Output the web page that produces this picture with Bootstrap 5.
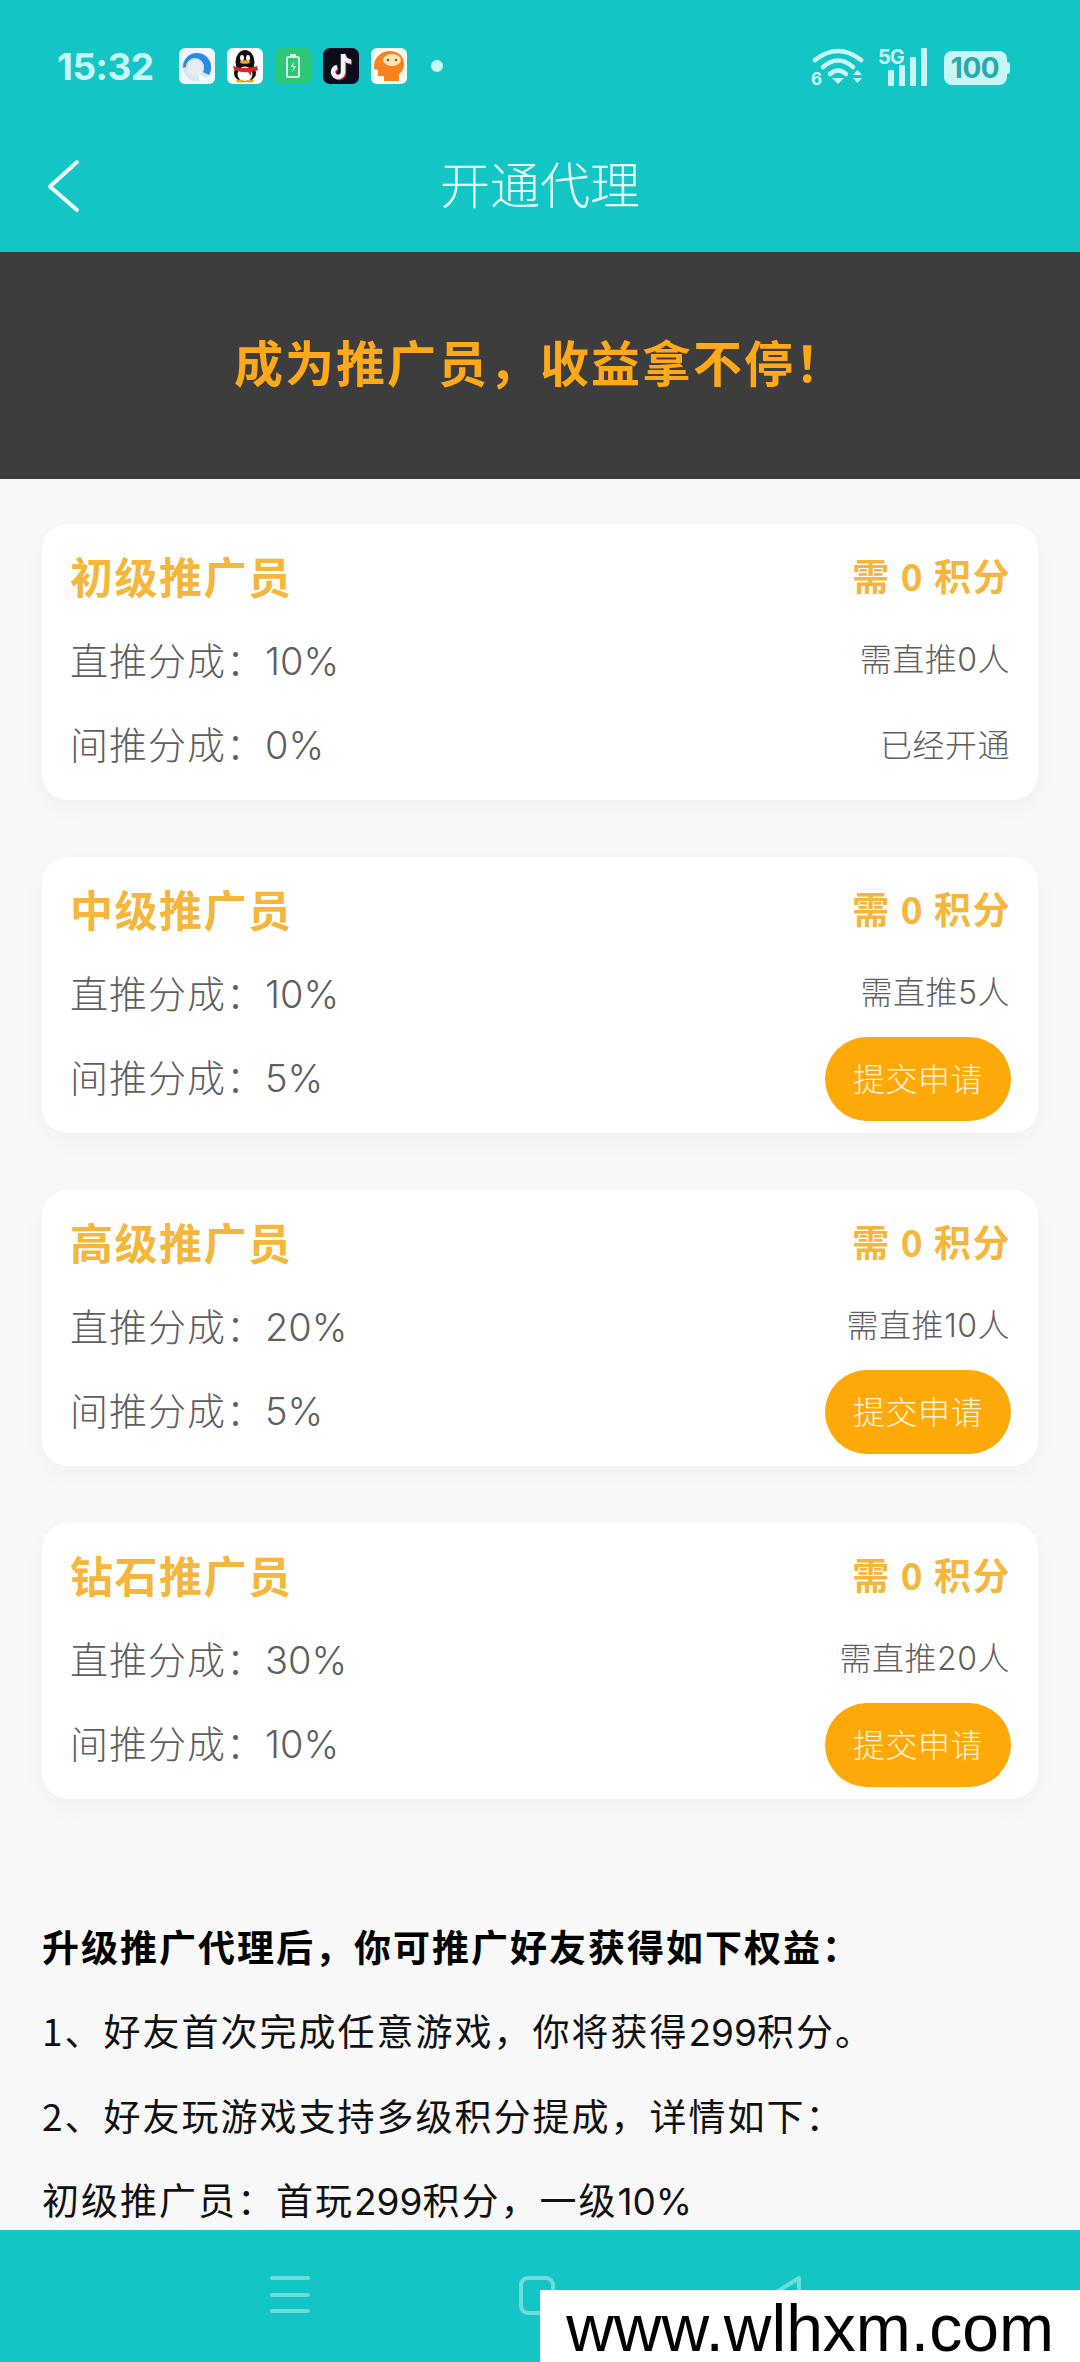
<!DOCTYPE html>
<html lang="zh-CN">
<head>
  <meta charset="UTF-8" />
  <meta name="viewport" content="width=device-width, initial-scale=1.0"/>
  <title>开通代理</title>
  <link href="https://cdn.jsdelivr.net/npm/bootstrap@5.3.3/dist/css/bootstrap.min.css" rel="stylesheet" />
  <style>
    html, body { height: 2362px; overflow: hidden; }
    body {
      background-color: #f8f8f8;
      font-family: "Noto Sans CJK SC", "Noto Sans", sans-serif;
      position: relative;
    }
    .top-area { background-color: #14c5c5; height: 252px; }
    .status-row { height: 118px; padding: 48px 70px 0 57px; color: #c8f6f6; }
    .clock { font-family: Inter, sans-serif; font-weight: 700; font-size: 37px; line-height: 37px; width: 122px; letter-spacing: -.5px; }
    .app-icons { gap: 12px; }
    .app-icons svg { display: block; }
    .note-dot { width: 12px; height: 12px; border-radius: 50%; background: #c8f6f6; margin-left: 12px; }
    .signal-icon { margin-top: -6px; margin-left: 12px; }
    .title-row { height: 134px; position: relative; }
    .back-arrow { position: absolute; left: 47px; top: 41px; }
    .page-title { font-size: 50px; font-weight: 300; color: #e6fbfb; line-height: 128px; }
    .promo-band { background-color: #3d3d3d; height: 227px; color: #ffa91a; font-size: 49px; font-weight: 700; letter-spacing: 2px; padding-bottom: 10px; }
    .cards-wrap { padding: 45px 42px 0; gap: 57px; }
    .agent-box {
      height: 276px; padding: 12px 28px; border: 0; border-radius: 26px;
      box-shadow: 0 10px 24px rgba(0, 0, 0, .03);
    }
    .agent-line { height: 84px; }
    .agent-name { font-size: 43px; font-weight: 700; color: #f5b63c; letter-spacing: 1.5px; padding-bottom: 6px; }
    .agent-points { font-size: 37px; font-weight: 700; color: #f5b63c; letter-spacing: 1.5px; margin-right: -1px; padding-bottom: 4px; }
    .agent-rate { font-size: 38px; font-weight: 300; color: #5f5f5f; letter-spacing: 1px; padding-bottom: 4px; }
    .agent-rate b { font-family: Inter, sans-serif; font-weight: 300; letter-spacing: 0; }
    .agent-need { font-size: 32px; font-weight: 300; color: #5f5f5f; letter-spacing: .5px; padding-bottom: 7px; }
    .agent-need b { font-family: Inter, sans-serif; font-weight: 300; }
    .apply-btn {
      width: 186px; height: 84px; padding: 0 0 5px; border: 0; margin-right: -1px;
      background-color: #ffa908; color: #fff3d9; font-size: 32px; font-weight: 300; letter-spacing: .5px;
    }
    .rules { padding: 106px 42px 0; font-size: 37px; letter-spacing: 2px; line-height: 83.5px; color: #111; font-weight: 400; }
    .rules div:first-child { font-weight: 700; color: #000; }
    .rules span { font-family: Inter, sans-serif; letter-spacing: 0; }
    .bottom-bar { position: absolute; left: 0; right: 0; bottom: 0; height: 132px; background-color: #14c5c5; }
    .bottom-bar svg { position: absolute; left: 260px; top: 40px; }
    .watermark {
      position: absolute; right: 0; bottom: 0; width: 540px; height: 72px;
      background: #fff; color: #000; text-align: center;
      font-family: "Liberation Sans", sans-serif; font-size: 66px; line-height: 76px;
    }
  </style>
</head>
<body>

  <header class="top-area">
    <div class="status-row d-flex align-items-start">
      <div class="clock">15:32</div>
      <div class="app-icons d-flex align-items-center">
        <!-- browser -->
        <svg width="36" height="36" viewBox="0 0 36 36">
          <rect width="36" height="36" rx="6" fill="#eef6fc"/>
          <circle cx="18" cy="19" r="14" fill="#d5e6f5"/>
          <path d="M4 19a14 14 0 0 1 28 0c0 4-.5 6-2 8l-6-3c1-2 1-3 1-5a9 9 0 0 0-18 0l-3 1z" fill="#2a8ae6"/>
          <circle cx="16" cy="20" r="8" fill="#e6ecf2"/>
          <path d="M20 25l8 7h-8z" fill="#f6fafd"/>
        </svg>
        <!-- penguin -->
        <svg width="36" height="36" viewBox="0 0 36 36">
          <rect width="36" height="36" rx="6" fill="#fff"/>
          <ellipse cx="18" cy="14" rx="9.500" ry="12" fill="#111"/>
          <ellipse cx="18" cy="25" rx="11" ry="9" fill="#111"/>
          <ellipse cx="18" cy="26" rx="7.500" ry="7.500" fill="#fff"/>
          <ellipse cx="15" cy="10" rx="2" ry="3" fill="#fff"/>
          <ellipse cx="21" cy="10" rx="2" ry="3" fill="#fff"/>
          <ellipse cx="18" cy="14" rx="5" ry="1.800" fill="#f3a51b"/>
          <path d="M6 18q12 4 24 0l1 4-7 2v4l-3-4q-6 1-14-2z" fill="#d8261c"/>
          <ellipse cx="13" cy="33" rx="4" ry="1.500" fill="#f3a51b"/>
          <ellipse cx="23" cy="33" rx="4" ry="1.500" fill="#f3a51b"/>
        </svg>
        <!-- battery app -->
        <svg width="36" height="36" viewBox="0 0 36 36">
          <rect width="36" height="36" rx="7" fill="#2cc878"/>
          <rect x="12" y="9" width="12" height="20" rx="1.500" fill="none" stroke="#d6f7e6" stroke-width="2"/>
          <rect x="15" y="6" width="6" height="3" fill="#d6f7e6"/>
          <path d="M19 13l-3 6h3l-2 6 4-7h-3z" fill="#d6f7e6"/>
        </svg>
        <!-- tiktok -->
        <svg width="36" height="36" viewBox="0 0 36 36">
          <rect width="36" height="36" rx="7" fill="#0a0d1a"/>
          <path d="M20 6v18a5 5 0 1 1-6-5M20 6c.5 4 3 7 8 7.500" fill="none" stroke="#f0325a" stroke-width="4.500" transform="translate(1 1)"/>
          <path d="M20 6v18a5 5 0 1 1-6-5M20 6c.5 4 3 7 8 7.500" fill="none" stroke="#f2f2f2" stroke-width="4.500"/>
        </svg>
        <!-- head -->
        <svg width="36" height="36" viewBox="0 0 36 36">
          <rect width="36" height="36" rx="6" fill="#f8fbf2"/>
          <path d="M3 18C3 9 11 3 19 3c8 0 14 5 14 13 0 5-2 8-5 10v7H13v-5H7v-6l-4-1z" fill="#f5831f"/>
          <ellipse cx="21" cy="12" rx="9" ry="6" fill="#fbe3b8"/>
          <circle cx="17" cy="12" r="1.300" fill="#8a5a2a"/>
          <circle cx="25" cy="12" r="1.300" fill="#8a5a2a"/>
        </svg>
        <div class="note-dot"></div>
      </div>
      <div class="d-flex align-items-start ms-auto">
        <!-- wifi 6 -->
        <svg width="56" height="46" viewBox="0 0 56 46" fill="none" stroke="#c8f6f6" stroke-linecap="round">
          <path d="M5 12Q28-6 51 12" stroke-width="4.500"/>
          <path d="M13 19Q28 6 43 19" stroke-width="4.500"/>
          <path d="M20 26Q28 19 36 26" stroke-width="4.500"/>
          <path d="M22 30h12l-6 6z" fill="#c8f6f6" stroke="none"/>
          <path d="M43 27h9l-4.500-5zM43 30h9l-4.500 5z" fill="#c8f6f6" stroke="none"/>
          <text x="1" y="37" font-family="Inter, sans-serif" font-size="17" font-weight="700" fill="#c8f6f6" stroke="none">6</text>
        </svg>
        <!-- 5G signal -->
        <svg class="signal-icon" width="50" height="46" viewBox="0 -6 50 46" fill="#c8f6f6">
          <text x="0" y="16" font-family="Inter, sans-serif" font-size="20" font-weight="700" letter-spacing="-1">5G</text>
          <rect x="10" y="22" width="6" height="16" rx="1"/>
          <rect x="21" y="17" width="6" height="21" rx="1"/>
          <rect x="32" y="9" width="6" height="29" rx="1"/>
          <rect x="43" y="0" width="6" height="38" rx="1"/>
        </svg>
        <!-- battery -->
        <svg class="ms-3" width="66" height="38" viewBox="0 0 66 38">
          <rect x="0" y="3" width="63" height="34" rx="8" fill="#c8f6f6"/>
          <path d="M63 14q3 0 3 3v6q0 3-3 3z" fill="#c8f6f6"/>
          <text x="31" y="30" text-anchor="middle" font-family="Inter, sans-serif" font-size="28" font-weight="700" fill="#2aa9ad" letter-spacing="-.5">100</text>
        </svg>
      </div>
    </div>
    <div class="title-row text-center">
      <svg class="back-arrow" width="34" height="54" viewBox="0 0 34 54" fill="none" stroke="#eafcfc" stroke-width="4" stroke-linecap="round" stroke-linejoin="round">
        <path d="M30 3L3 27.500 30 51"/>
      </svg>
      <div class="page-title">开通代理</div>
    </div>
  </header>

  <section class="promo-band d-flex align-items-center justify-content-center">成为推广员，收益拿不停！</section>

  <main>
    <div id="agentCards" class="cards-wrap d-flex flex-column"></div>

    <div class="rules">
      <div>升级推广代理后，你可推广好友获得如下权益：</div>
      <div>1、好友首次完成任意游戏，你将获得<span>299</span>积分。</div>
      <div>2、好友玩游戏支持多级积分提成，详情如下：</div>
      <div>初级推广员：首玩<span>299</span>积分，一级<span>10%</span></div>
    </div>
  </main>

  <footer class="bottom-bar">
    <svg width="560" height="80" viewBox="0 0 560 80" fill="none" stroke="#6fdcdc" stroke-width="4" stroke-linecap="round" stroke-linejoin="round">
      <path d="M12 8h36M12 25h36M12 41h36"/>
      <rect x="261" y="8" width="32" height="35" rx="7"/>
      <path d="M539 8L510 26l29 18z"/>
    </svg>
  </footer>
  <div class="watermark">www.wlhxm.com</div>

  <script>
    const agents = [
      { name: "初级推广员", direct: "10%", indirect: "0%", need: "0", opened: true },
      { name: "中级推广员", direct: "10%", indirect: "5%", need: "5" },
      { name: "高级推广员", direct: "20%", indirect: "5%", need: "10" },
      { name: "钻石推广员", direct: "30%", indirect: "10%", need: "20" }
    ];

    document.getElementById("agentCards").innerHTML = agents.map(a => `
      <div class="card agent-box">
        <div class="agent-line d-flex justify-content-between align-items-center">
          <span class="agent-name">${a.name}</span>
          <span class="agent-points">需 0 积分</span>
        </div>
        <div class="agent-line d-flex justify-content-between align-items-center">
          <span class="agent-rate">直推分成：<b>${a.direct}</b></span>
          <span class="agent-need">需直推<b>${a.need}</b>人</span>
        </div>
        <div class="agent-line d-flex justify-content-between align-items-center">
          <span class="agent-rate">间推分成：<b>${a.indirect}</b></span>
          ${a.opened
            ? `<span class="agent-need">已经开通</span>`
            : `<button class="btn apply-btn rounded-pill">提交申请</button>`}
        </div>
      </div>
    `).join("");
  </script>

  <script src="https://cdn.jsdelivr.net/npm/bootstrap@5.3.3/dist/js/bootstrap.bundle.min.js"></script>
</body>
</html>
